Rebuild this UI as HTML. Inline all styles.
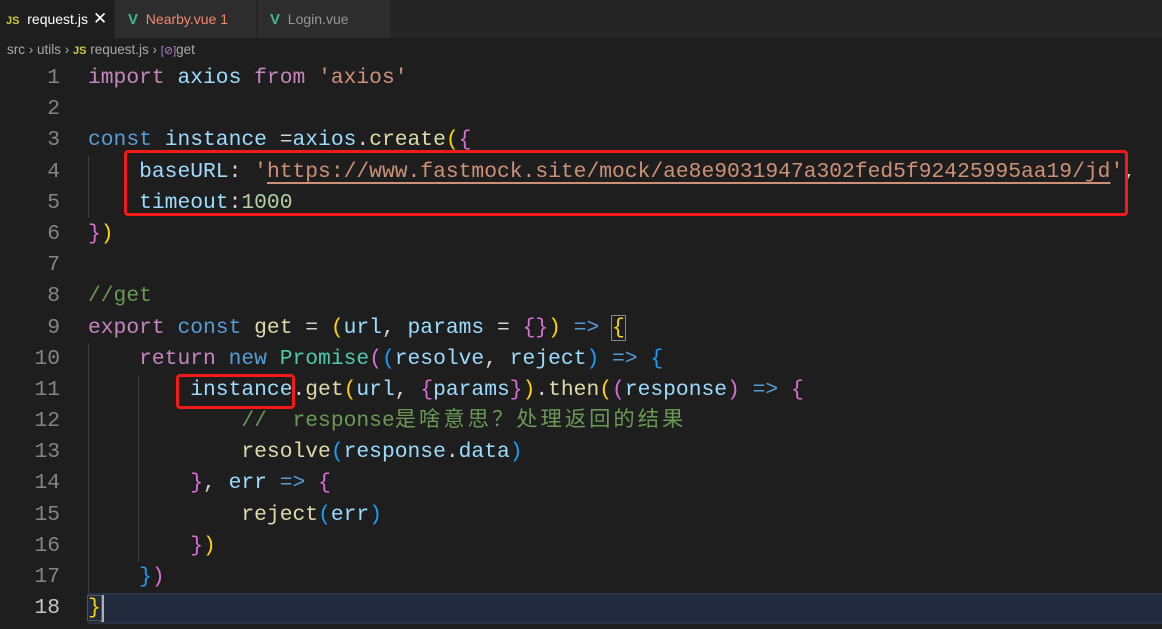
<!DOCTYPE html>
<html><head><meta charset="utf-8"><style>
*{margin:0;padding:0;box-sizing:border-box}
body{width:1162px;height:629px;background:#1e1e1e;overflow:hidden;position:relative;font-family:"Liberation Sans",sans-serif}
.tabs{position:absolute;left:0;top:0;width:1162px;height:38px;background:#252526}
.tab{position:absolute;top:0;height:38px;background:#2d2d2d;font-size:14px;line-height:38px;color:#969696;border-right:1px solid #252526}
.tab.a{background:#1e1e1e;color:#fff}
.js{color:#cbcb41;font-weight:bold;font-size:11px}
.v{color:#41b883;font-weight:bold;font-size:15px}
.bc{position:absolute;top:38px;left:0;height:24px;line-height:24px;font-size:13.5px;color:#a9a9a9;padding-left:7px}
.code{position:absolute;left:0;top:63px;width:1162px;font-family:"Liberation Mono","Noto Sans CJK SC",monospace;font-size:21.3px}
.l{height:31.2px;line-height:31.2px;position:relative;white-space:pre;color:#d4d4d4}
.n{position:absolute;left:0;width:60px;text-align:right;color:#858585}
.t{position:absolute;left:88px}
.k{color:#c586c0}.c{color:#569cd6}.vv{color:#9cdcfe}.f{color:#dcdcaa}.s{color:#ce9178}.num{color:#b5cea8}.cm{color:#6a9955}.cl{color:#4ec9b0}
.y{color:#ffd700}.m{color:#da70d6}.b{color:#179fff}
.g{position:absolute;width:1px;background:#404040}
.box{position:absolute;border:3px solid #f41a1a;border-radius:4px}
.cj{letter-spacing:3px}
</style></head><body>
<div class="tabs">
<div class="tab a" style="left:0;width:115px;padding-left:6px"><span class="js">JS</span>&nbsp; request.js <span style="position:absolute;left:93px;color:#fff;font-size:17px">✕</span></div>
<div class="tab" style="left:115px;width:142px;padding-left:13px;color:#f48771"><span class="v">V</span>&nbsp; Nearby.vue&nbsp;1</div>
<div class="tab" style="left:258px;width:133px;padding-left:12px"><span class="v">V</span>&nbsp; Login.vue</div>
</div>
<div class="bc">src <span>›</span> utils <span>›</span> <span class="js">JS</span> request.js <span>›</span> <span style="color:#b180d7;font-size:11px">[⊘]</span>get</div>
<div class="g" style="left:88px;top:156px;height:62px"></div>
<div class="g" style="left:88px;top:343px;height:250px"></div>
<div class="g" style="left:138px;top:375px;height:187px"></div>
<div class="code">
<div class="l"><span class="n">1</span><span class="t"><span class="k">import</span> <span class="vv">axios</span> <span class="k">from</span> <span class="s">'axios'</span></span></div>
<div class="l"><span class="n">2</span></div>
<div class="l"><span class="n">3</span><span class="t"><span class="c">const</span> <span class="vv">instance</span> =<span class="vv">axios</span>.<span class="f">create</span><span class="y">(</span><span class="m">{</span></span></div>
<div class="l"><span class="n">4</span><span class="t">    <span class="vv">baseURL</span>: <span class="s">'<span style="text-decoration:underline;text-underline-offset:5px">https://www.fastmock.site/mock/ae8e9031947a302fed5f92425995aa19/jd</span>'</span>,</span></div>
<div class="l"><span class="n">5</span><span class="t">    <span class="vv">timeout</span>:<span class="num">1000</span></span></div>
<div class="l"><span class="n">6</span><span class="t"><span class="m">}</span><span class="y">)</span></span></div>
<div class="l"><span class="n">7</span></div>
<div class="l"><span class="n">8</span><span class="t"><span class="cm">//get</span></span></div>
<div class="l"><span class="n">9</span><span class="t"><span class="k">export</span> <span class="c">const</span> <span class="f">get</span> = <span class="y">(</span><span class="vv">url</span>, <span class="vv">params</span> = <span class="m">{}</span><span class="y">)</span> <span class="c">=&gt;</span> <span class="y" style="outline:1px solid #888">{</span></span></div>
<div class="l"><span class="n">10</span><span class="t">    <span class="k">return</span> <span class="c">new</span> <span class="cl">Promise</span><span class="m">(</span><span class="b">(</span><span class="vv">resolve</span>, <span class="vv">reject</span><span class="b">)</span> <span class="c">=&gt;</span> <span class="b">{</span></span></div>
<div class="l"><span class="n">11</span><span class="t">        <span class="vv">instance</span>.<span class="f">get</span><span class="y">(</span><span class="vv">url</span>, <span class="m">{</span><span class="vv">params</span><span class="m">}</span><span class="y">)</span>.<span class="f">then</span><span class="y">(</span><span class="m">(</span><span class="vv">response</span><span class="m">)</span> <span class="c">=&gt;</span> <span class="m">{</span></span></div>
<div class="l"><span class="n">12</span><span class="t">            <span class="cm">//  response<span class="cj">是啥意思？处理返回的结果</span></span></span></div>
<div class="l"><span class="n">13</span><span class="t">            <span class="f">resolve</span><span class="b">(</span><span class="vv">response</span>.<span class="vv">data</span><span class="b">)</span></span></div>
<div class="l"><span class="n">14</span><span class="t">        <span class="m">}</span>, <span class="vv">err</span> <span class="c">=&gt;</span> <span class="m">{</span></span></div>
<div class="l"><span class="n">15</span><span class="t">            <span class="f">reject</span><span class="b">(</span><span class="vv">err</span><span class="b">)</span></span></div>
<div class="l"><span class="n">16</span><span class="t">        <span class="m">}</span><span class="y">)</span></span></div>
<div class="l"><span class="n">17</span><span class="t">    <span class="b">}</span><span class="m">)</span></span></div>
<div class="l" style="background:#222a3e;border-top:2px solid #2b3347;border-bottom:2px solid #2b3347;margin-left:88px;line-height:27px"><span class="n" style="left:-88px;color:#c6c6c6">18</span><span class="t" style="left:0"><span class="y" style="outline:1px solid #555">}</span><span style="display:inline-block;width:3px;height:27px;background:#aeafad;vertical-align:top"></span></span></div>
</div>
<div class="box" style="left:124px;top:150px;width:1004px;height:66px"></div>
<div class="box" style="left:176px;top:374px;width:119px;height:35px"></div>
</body></html>
